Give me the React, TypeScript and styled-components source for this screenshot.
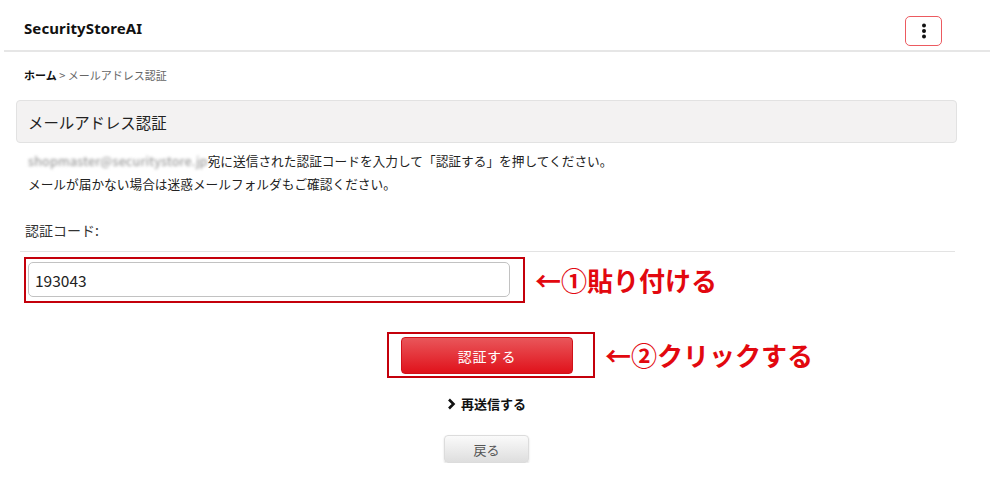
import React from "react";
import styled, { createGlobalStyle } from "styled-components";

const GlobalStyle = createGlobalStyle`
  html, body {
    margin: 0;
    padding: 0;
    background: #ffffff;
  }
  body {
    font-family: "Noto Sans CJK JP", "Noto Sans", sans-serif;
    color: #222;
  }
  * { box-sizing: border-box; }
`;

const Header = styled.header`
  display: flex;
  align-items: center;
  justify-content: space-between;
  height: 52px;
  margin: 0 10px 0 4px;
  padding: 6px 48px 0 20px;
  border-bottom: 2px solid #e6e6e6;
`;

const Logo = styled.div`
  font-family: "Noto Sans", "Noto Sans CJK JP", sans-serif;
  font-weight: 700;
  font-size: 15px;
  color: #111;
  letter-spacing: 0.1px;
`;

const KebabButton = styled.button`
  width: 37px;
  height: 30px;
  border: 1.5px solid #ec5a60;
  border-radius: 5px;
  background: #fff;
  display: flex;
  align-items: center;
  justify-content: center;
  padding: 0;
  margin-top: 6px;
`;

const Main = styled.main`
  padding: 0 43px 0 16px;
`;

const Breadcrumb = styled.nav`
  margin-top: 15px;
  padding-left: 8px;
  font-size: 11px;
  line-height: 16px;
  color: #666;
`;

const Crumb = styled.span<{ $strong?: boolean }>`
  font-weight: ${(p) => (p.$strong ? 700 : 400)};
  color: ${(p) => (p.$strong ? "#111" : "#666")};
`;

const TitleBox = styled.div`
  margin-top: 17px;
  height: 43px;
  display: flex;
  align-items: center;
  padding-left: 11px;
  background: #f3f2f2;
  border: 1px solid #e2e2e2;
  border-radius: 4px;
  font-size: 15.4px;
  color: #222;
`;

const Message = styled.p`
  margin: 6px 0 0;
  padding-left: 12px;
  font-size: 12.7px;
  line-height: 23px;
  color: #222;
`;

const Blurred = styled.span`
  color: #8a8a8a;
  filter: blur(1.4px);
  letter-spacing: 0.2px;
`;

const Label = styled.div`
  margin-top: 25px;
  padding-left: 9px;
  font-size: 14px;
  line-height: 20px;
  color: #333;
`;

const Divider = styled.hr`
  margin: 11px 2px 0 4px;
  border: none;
  border-top: 1px solid #e3e3e3;
`;

const InputRow = styled.div`
  display: flex;
  align-items: center;
  margin-top: 5px;
  padding-left: 8px;
  gap: 10px;
`;

const Highlight = styled.div<{ $pad: string }>`
  border: 2px solid #c4000b;
  padding: ${(p) => p.$pad};
  display: flex;
  background: #fff;
`;

const CodeInput = styled.input`
  width: 482px;
  height: 35px;
  border: 1px solid #c2c2c2;
  border-radius: 5px;
  padding: 0 6px;
  font-family: "Noto Sans CJK JP", "Noto Sans", sans-serif;
  font-size: 15.5px;
  color: #222;
  outline: none;
`;

const Note = styled.span`
  font-weight: 700;
  font-size: 26px;
  line-height: 30px;
  color: #e2080f;
  white-space: nowrap;
`;

const ButtonRow = styled.div`
  display: grid;
  grid-template-columns: 1fr auto 1fr;
  align-items: center;
  column-gap: 10px;
  margin-top: 29px;
  padding-left: 9px;
`;

const PrimaryButton = styled.button`
  width: 172px;
  height: 37px;
  border: 1px solid #d0121a;
  border-radius: 4px;
  background: linear-gradient(#e9565a, #e0121b);
  color: #fff;
  font-family: "Noto Sans CJK JP", "Noto Sans", sans-serif;
  font-size: 14px;
  letter-spacing: 0.6px;
`;

const Resend = styled.a`
  display: flex;
  align-items: center;
  justify-content: center;
  gap: 5px;
  margin-top: 17px;
  font-size: 13px;
  font-weight: 700;
  line-height: 18px;
  color: #111;
  text-decoration: none;
`;

const BackWrap = styled.div`
  display: flex;
  justify-content: center;
  margin-top: 22px;
`;

const BackButton = styled.button`
  width: 85px;
  height: 28px;
  border: 1px solid #dcdcdc;
  border-radius: 4px;
  background: linear-gradient(#fafafa, #dedede);
  box-shadow: 0 1px 2px rgba(0, 0, 0, 0.15);
  color: #555;
  font-family: "Noto Sans CJK JP", "Noto Sans", sans-serif;
  font-size: 13px;
`;

export default function App() {
  return (
    <>
      <GlobalStyle />
      <Header>
        <Logo>SecurityStoreAI</Logo>
        <KebabButton aria-label="menu">
          <svg width="6" height="16" viewBox="0 0 6 16">
            <circle cx="3" cy="2.5" r="2" fill="#111" />
            <circle cx="3" cy="8" r="2" fill="#111" />
            <circle cx="3" cy="13.5" r="2" fill="#111" />
          </svg>
        </KebabButton>
      </Header>
      <Main>
        <Breadcrumb>
          <Crumb $strong>ホーム</Crumb>
          <Crumb> &gt; メールアドレス認証</Crumb>
        </Breadcrumb>
        <TitleBox>メールアドレス認証</TitleBox>
        <Message>
          <Blurred>shopmaster@securitystore.jp</Blurred>
          宛に送信された認証コードを入力して「認証する」を押してください。
          <br />
          メールが届かない場合は迷惑メールフォルダもご確認ください。
        </Message>
        <Label>認証コード:</Label>
        <Divider />
        <InputRow>
          <Highlight $pad="3px 13px 4px 2px">
            <CodeInput defaultValue="193043" />
          </Highlight>
          <Note>←①貼り付ける</Note>
        </InputRow>
        <ButtonRow>
          <span />
          <Highlight $pad="3px 20px 2px 12px">
            <PrimaryButton>認証する</PrimaryButton>
          </Highlight>
          <Note>←②クリックする</Note>
        </ButtonRow>
        <Resend href="#">
          <svg width="9" height="12" viewBox="0 0 9 12">
            <polyline
              points="2,1.5 6.5,6 2,10.5"
              fill="none"
              stroke="#111"
              strokeWidth="2.6"
            />
          </svg>
          再送信する
        </Resend>
        <BackWrap>
          <BackButton>戻る</BackButton>
        </BackWrap>
      </Main>
    </>
  );
}
